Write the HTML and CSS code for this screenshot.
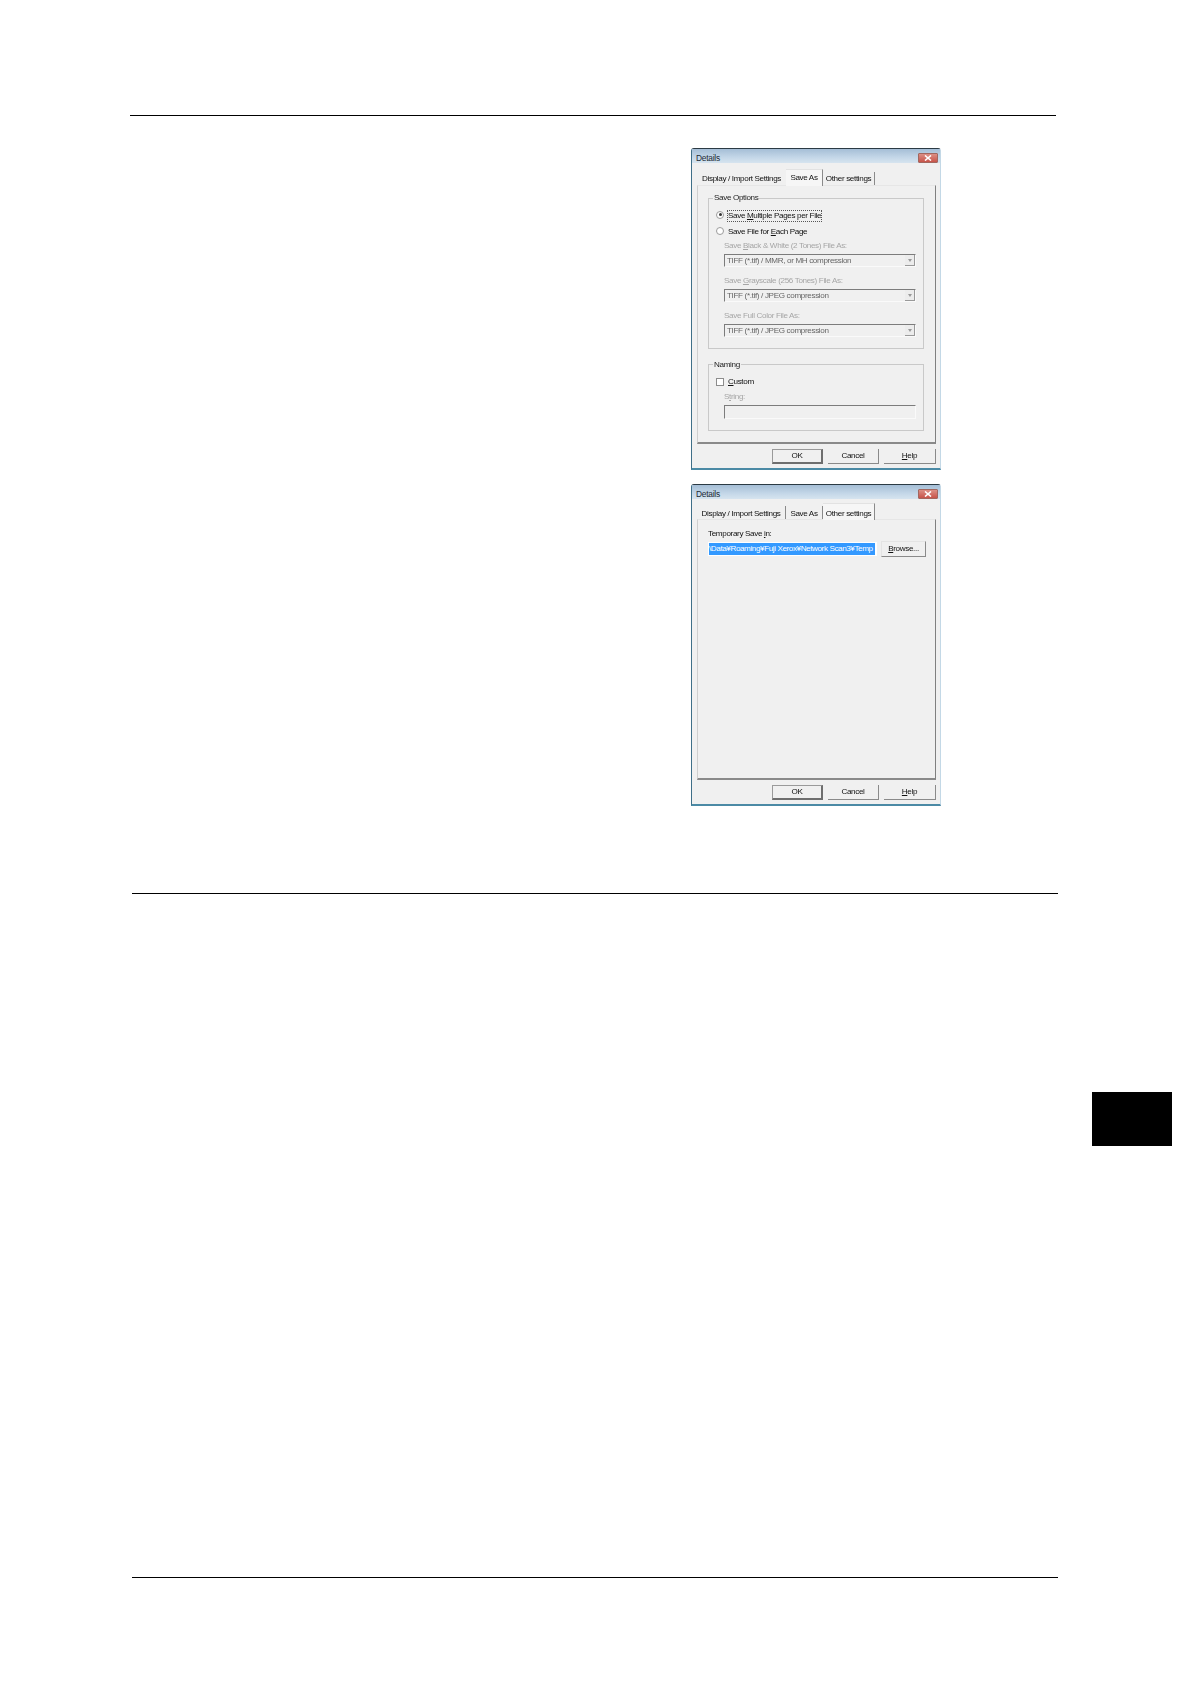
FILE: index.html
```html
<!DOCTYPE html>
<html lang="en">
<head>
<meta charset="utf-8">
<title>Details</title>
<link rel="stylesheet" href="styles.css">
</head>
<body>
<div class="page">
  <hr class="rule rule-top">
  <div class="dialogs">
    <section class="dialog dialog-save">
      <header class="titlebar">
        <span class="title">Details</span>
        <span class="close"><svg width="8" height="6" viewBox="0 0 8 6"><path d="M1 0.5 L7 5.5 M7 0.5 L1 5.5" stroke="#fff" stroke-width="1.6" fill="none"/></svg></span>
      </header>
      <nav class="tabs">
        <span class="tab tab-display">Display / Import Settings</span>
        <span class="tab tab-save tab-active tab-sep">Save As</span>
        <span class="tab tab-other tab-sep">Other settings</span>
      </nav>
      <div class="panel">
        <div class="group group-options">
          <div class="legend">Save Options</div>
          <div class="row"><span class="radio radio-on"></span><span class="focus">Save <u>M</u>ultiple Pages per File</span></div>
          <div class="row row-next"><span class="radio"></span><span>Save File for <u>E</u>ach Page</span></div>
          <div class="label label-first">Save <u>B</u>lack &amp; White (2 Tones) File As:</div>
          <div class="combo"><span>TIFF (*.tif) / MMR, or MH compression</span><i class="arrow"></i></div>
          <div class="label">Save <u>G</u>rayscale (256 Tones) File As:</div>
          <div class="combo"><span>TIFF (*.tif) / JPEG compression</span><i class="arrow"></i></div>
          <div class="label">Save Full Color File As:</div>
          <div class="combo"><span>TIFF (*.tif) / JPEG compression</span><i class="arrow"></i></div>
        </div>
        <div class="group group-naming">
          <div class="legend">Naming</div>
          <div class="row row-check"><span class="check"></span><span><u>C</u>ustom</span></div>
          <div class="label label-string">S<u>t</u>ring:</div>
          <div class="field"></div>
        </div>
      </div>
      <footer class="footer">
        <span class="btn btn-default">OK</span>
        <span class="btn">Cancel</span>
        <span class="btn btn-help"><u>H</u>elp</span>
      </footer>
    </section>

    <section class="dialog dialog-other">
      <header class="titlebar">
        <span class="title">Details</span>
        <span class="close"><svg width="8" height="6" viewBox="0 0 8 6"><path d="M1 0.5 L7 5.5 M7 0.5 L1 5.5" stroke="#fff" stroke-width="1.6" fill="none"/></svg></span>
      </header>
      <nav class="tabs">
        <span class="tab tab-display tab-sep">Display / Import Settings</span>
        <span class="tab tab-save tab-sep">Save As</span>
        <span class="tab tab-other tab-active tab-sep">Other settings</span>
      </nav>
      <div class="panel">
        <div class="save-label">Temporary Save <u>i</u>n:</div>
        <div class="save-row">
          <div class="path"><span class="path-text">\Data¥Roaming¥Fuji Xerox¥Network Scan3¥Temp</span></div>
          <span class="btn btn-browse"><span><u>B</u>rowse...</span></span>
        </div>
      </div>
      <footer class="footer">
        <span class="btn btn-default">OK</span>
        <span class="btn">Cancel</span>
        <span class="btn btn-help"><u>H</u>elp</span>
      </footer>
    </section>
  </div>
  <hr class="rule rule-mid">
  <div class="thumb-row"><div class="thumb"></div></div>
  <hr class="rule rule-bottom">
</div>
</body>
</html>
```

FILE: styles.css
```css
* { box-sizing: border-box; }
html, body { margin: 0; padding: 0; background: #fff; }
.page { width: 1190px; height: 1684px; padding-top: 115px; overflow: hidden; }

.rule { border: 0; height: 1px; background: #000; margin: 0; }
.rule-top { margin-left: 130px; width: 926px; }
.rule-mid { margin-left: 132px; width: 926px; margin-top: 87px; }
.rule-bottom { margin-left: 132px; width: 926px; margin-top: 431px; }

.dialogs { margin: 32px 0 0 691px; display: flex; flex-direction: column; gap: 14px; }
.thumb-row { display: flex; justify-content: flex-end; padding-right: 18px; margin-top: 198px; }
.thumb { width: 80px; height: 54px; background: #000; }

.dialog {
  width: 250px; height: 322px; display: flex; flex-direction: column;
  background: #f0f0f0; color: #111;
  border: 1px solid #c3d8e6; border-left-color: #3f6f88; border-bottom: 2px solid #4b8aa5;
  border-top: 1px solid #2b3a44; border-radius: 3px 3px 0 0;
  font: 8.1px/10px "Liberation Sans", Arial, sans-serif; letter-spacing: -0.35px;
  filter: blur(0.3px);
}

.titlebar {
  height: 14px; flex: none; display: flex; justify-content: space-between; align-items: center;
  padding: 3px 2px 0 4px;
  background: linear-gradient(#a5bed6, #c4d7e8 60%, #d6e4ef);
}
.title { font-size: 8.4px; letter-spacing: -0.25px; color: #1c2a35; }
.close {
  width: 20px; height: 10px; display: flex; align-items: center; justify-content: center;
  background: linear-gradient(#dc8f85, #c8544a); border: 1px solid #a2675f; border-radius: 1px;
}

.tabs { display: flex; align-items: flex-end; height: 22px; flex: none; padding-left: 5px; }
.dialog-other .tabs { height: 20px; }
.tab { height: 13px; line-height: 13px; text-align: center; white-space: nowrap; }
.dialog-other .tab { line-height: 16px; }
.tab-display { width: 89px; }
.tab-save { width: 37px; }
.tab-other { width: 52px; }
.tab-sep { border-right: 1px solid #8a8a8a; }
.tab-active {
  height: 17px; padding-top: 1px; background: #f6f6f6;
  border-top: 1px solid #e2e2e2; position: relative; margin-bottom: -1px;
}
.dialog-other .tab-active { padding-top: 3px; line-height: 13px; }

.panel {
  flex: 1; margin: 0 4px 0 5px; padding-top: 13px;
  border: 1px solid #d6d6d6; border-top-color: #e6e6e6; border-left-color: #cfcfcf;
  border-right: 1px solid #808080; border-bottom: 2px solid #8a8a8a;
}
.group { margin: 0 11px 0 10px; border: 1px solid #c9c9c9; padding: 0 7px 0 8px; }
.group-options { height: 151px; margin-bottom: 15px; margin-top: -1px; }
.group-naming { height: 67px; }
.legend {
  width: fit-content; height: 10px; margin: -6px 0 6px -4px; padding: 0 1px;
  background: #f0f0f0; color: #222;
}
.group-naming .legend { margin-top: -5px; margin-bottom: 6px; }

.row { display: flex; align-items: center; height: 13px; gap: 4px; margin-left: -1px; }
.row-next { margin-top: 3px; }
.row-check { height: 12px; }
.focus { outline: 1px dotted #555; outline-offset: 0; }
.radio {
  width: 8px; height: 8px; border-radius: 50%; border: 1px solid #9a9a9a; background: #fff;
  display: flex; align-items: center; justify-content: center; flex: none; margin-top: -2px;
}
.radio-on::after { content: ""; width: 3px; height: 3px; border-radius: 50%; background: #333; }
.check { width: 8px; height: 8px; border: 1px solid #8c8c8c; background: #fff; flex: none; }

.label { color: #a6a6a6; height: 10px; margin: 9px 0 0 7px; white-space: nowrap; }
.label-first { margin-top: 3px; }
.label-string { margin-top: 4px; }
.combo, .field {
  display: flex; align-items: center; justify-content: space-between;
  height: 13px; margin: 3px 0 0 7px; padding: 0 0 0 2px;
  border: 1px solid #fafafa; border-top-color: #7c7c7c; border-left-color: #7c7c7c;
  color: #666; background: #f0f0f0; white-space: nowrap;
}
.field { height: 14px; }
.arrow {
  width: 10px; height: 11px; flex: none; display: flex; align-items: center; justify-content: center;
  background: #ececec; border-right: 1px solid #999; border-bottom: 1px solid #999;
}
.arrow::after { content: ""; border: 2px solid transparent; border-top: 3px solid #999; border-bottom: 0; }

.footer { height: 24px; flex: none; display: flex; justify-content: flex-end; gap: 5px; padding: 5px 4px 0 0; }
.btn {
  width: 51px; height: 15px; display: flex; align-items: center; justify-content: center;
  background: #f0f0f0;
  border-right: 1px solid #8a8a8a; border-bottom: 1px solid #8a8a8a;
}
.btn-help { width: 52px; }
.btn-default {
  width: 51px; border: 1px solid #9a9a9a; border-right: 2px solid #6e6e6e; border-bottom: 2px solid #6e6e6e;
}

.save-label { margin: 0 0 3px 10px; height: 10px; }
.dialog-other .panel { padding-top: 9px; }
.save-row { display: flex; align-items: flex-start; gap: 4px; margin-left: 10px; }
.path { width: 169px; height: 14px; background: #fff; padding: 1px 2px 1px 1px; overflow: hidden; }
.path-text { display: block; height: 12px; line-height: 12px; background: #3399ff; color: #fff; white-space: nowrap; letter-spacing: -0.4px; }
.btn-browse { width: 45px; height: 16px; margin-top: -1px; border-top: 1px solid #e4e4e4; border-left: 1px solid #e4e4e4; }
```
